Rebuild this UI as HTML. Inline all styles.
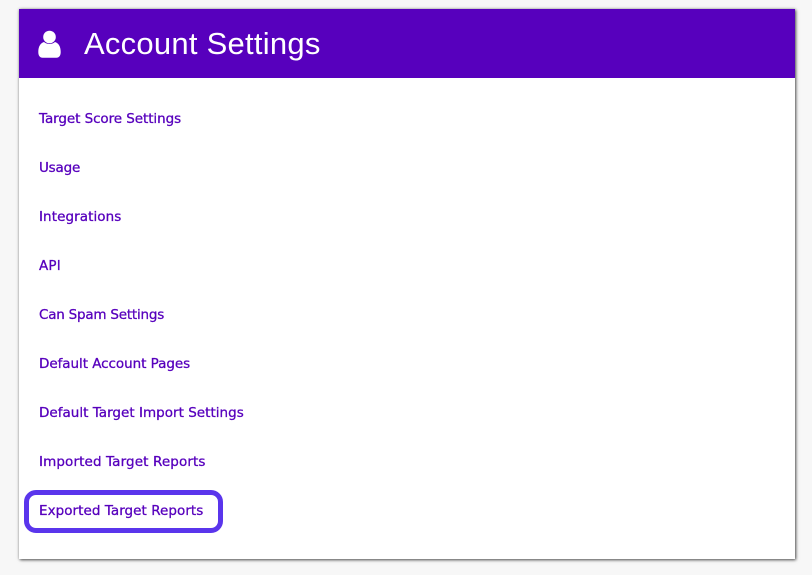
<!DOCTYPE html>
<html>
<head>
<meta charset="utf-8">
<style>
html,body{margin:0;padding:0;}
body{width:812px;height:575px;background:#f7f7f7;position:relative;overflow:hidden;font-family:"Liberation Sans",sans-serif;}
.card{position:absolute;left:19px;top:9px;width:776px;height:550px;background:#fff;box-shadow:1px 1px 3px rgba(0,0,0,.65),0 0 3px rgba(0,0,0,.2);}
.head{position:absolute;left:19px;top:9px;width:776px;height:69px;background:#5700bd;}
.title{position:absolute;left:84px;top:26px;line-height:36px;font-size:31px;color:#fff;white-space:nowrap;letter-spacing:.25px;}
.l{position:absolute;left:39px;line-height:20px;font-family:"DejaVu Sans",sans-serif;font-size:13.5px;color:#5700bd;white-space:nowrap;-webkit-text-stroke:.3px #5700bd;}
.box{position:absolute;left:24px;top:490px;width:189px;height:33px;border:5px solid #5a35ec;border-radius:12px;}
svg{position:absolute;left:0;top:0;}
</style>
</head>
<body>
<div class="card"></div>
<div class="head"></div>
<svg width="812" height="80" viewBox="0 0 812 80">
<circle cx="49.5" cy="37" r="6.3" fill="#fff"/>
<path d="M38.3 52 C38.3 46.5 40.5 43 44 42 C47 44.6 52 44.6 55 42 C58.5 43 60.7 46.5 60.7 52 C60.7 55.8 59 57.7 56.5 57.7 L42.5 57.7 C40 57.7 38.3 55.8 38.3 52 Z" fill="#fff"/>
</svg>
<div class="title">Account Settings</div>
<div class="l" style="top:108.5px;letter-spacing:-.07px">Target Score Settings</div>
<div class="l" style="top:157.5px;letter-spacing:-.2px">Usage</div>
<div class="l" style="top:206.5px;letter-spacing:.08px">Integrations</div>
<div class="l" style="top:255.5px;letter-spacing:.2px">API</div>
<div class="l" style="top:304.5px;letter-spacing:-.22px">Can Spam Settings</div>
<div class="l" style="top:353.5px;letter-spacing:-.05px">Default Account Pages</div>
<div class="l" style="top:402.5px;letter-spacing:.02px">Default Target Import Settings</div>
<div class="l" style="top:451.5px;letter-spacing:.12px">Imported Target Reports</div>
<div class="l" style="top:500.5px;letter-spacing:.05px">Exported Target Reports</div>
<div class="box"></div>
</body>
</html>
